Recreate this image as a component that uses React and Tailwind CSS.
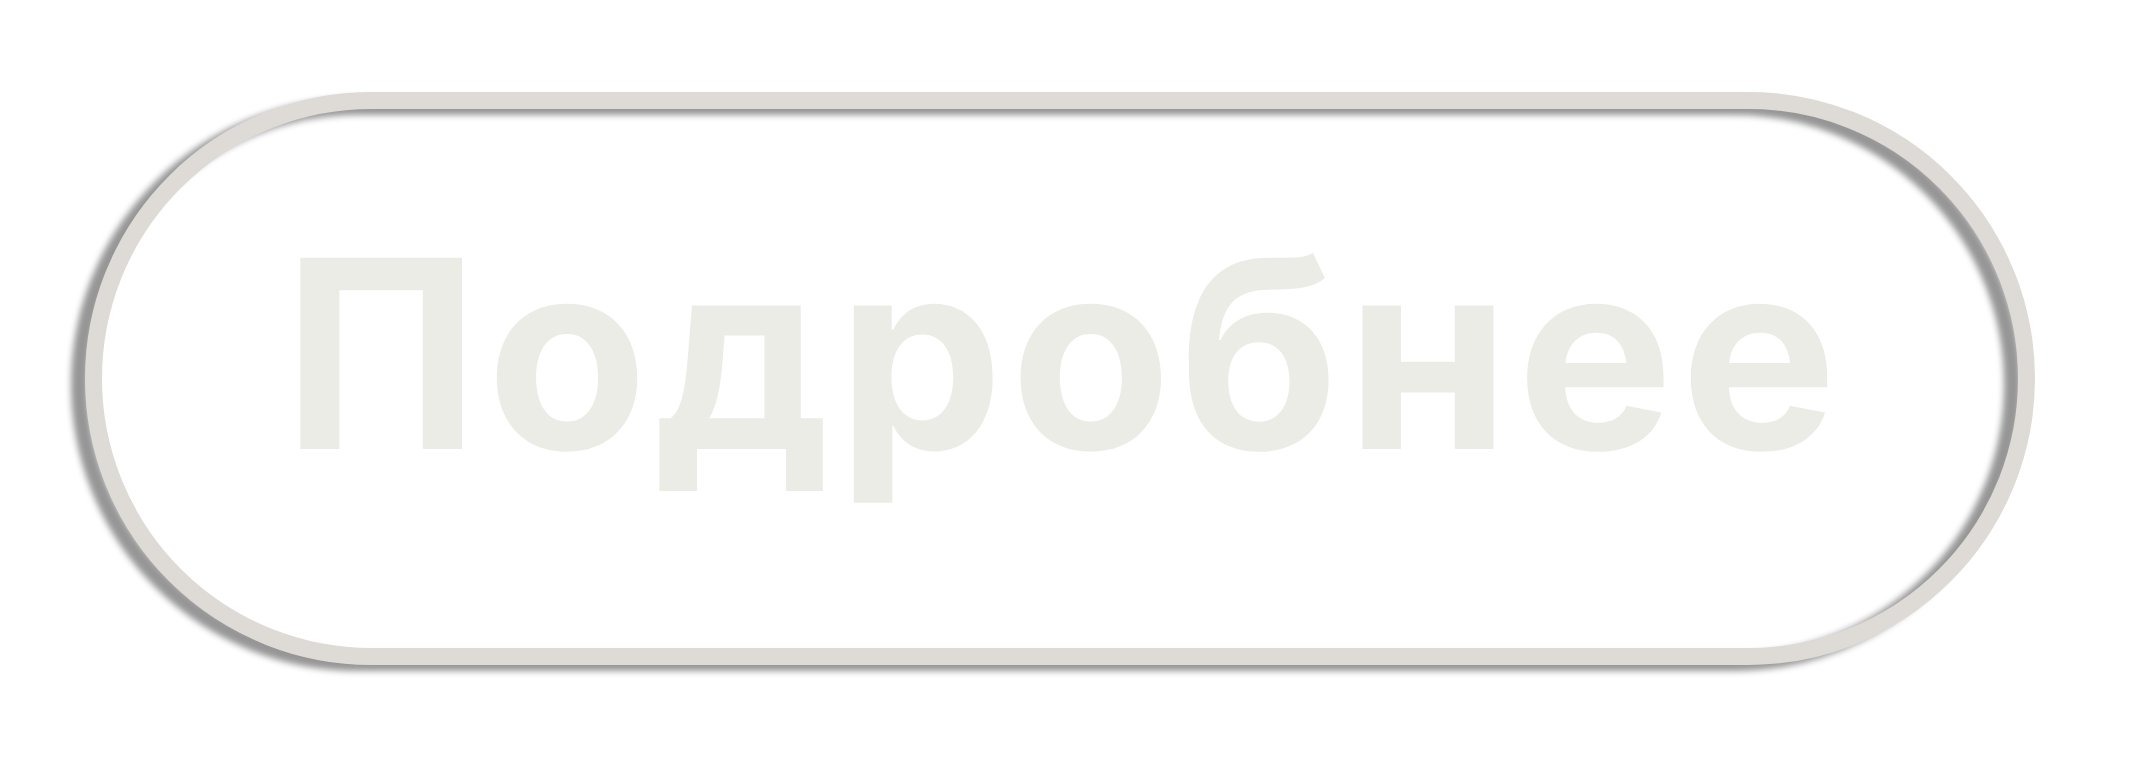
export default function App() {
  return (
    <div className="min-h-[766px] w-[2142px] bg-white pl-[85px] pt-[92px]">
      <a
        href="#"
        className="grid w-[1950px] h-[573px] no-underline"
      >
        {/* outline ring with an offset soft shadow that also shows through the hollow center */}
        <span className="col-start-1 row-start-1 block h-[573px] w-[1950px] rounded-full border-[17px] border-[#dedbd6] [filter:drop-shadow(-14px_6px_3px_#969696)]" />
        <span className="col-start-1 row-start-1 self-start justify-self-center pt-[130px] pl-[7px] font-['Inter','Noto_Sans',sans-serif] text-[263px] font-bold leading-none tracking-[7px] text-[#ecece7]">
          Подробнее
        </span>
      </a>
    </div>
  );
}
